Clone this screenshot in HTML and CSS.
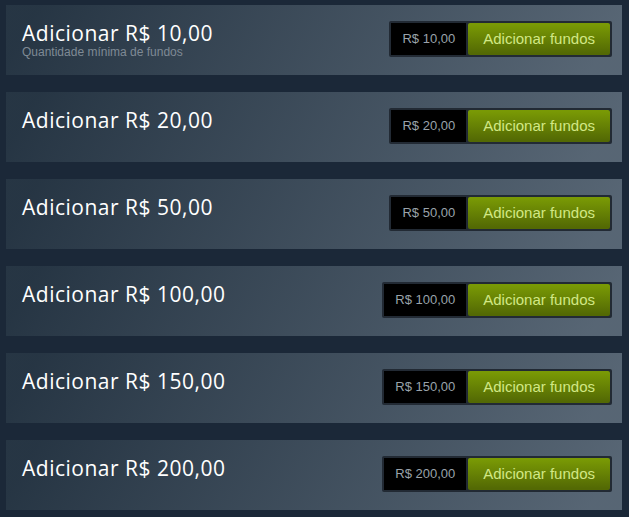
FILE: index.html
```html
<!DOCTYPE html>
<html lang="pt-BR">
<head>
    <meta charset="UTF-8">
    <meta name="viewport" content="width=device-width, initial-scale=1.0">
    <title>Adicionar fundos</title>
    <link rel="stylesheet" href="styles.css">
</head>
<body>
    <div class="wallet-list">

        <div class="purchase-row">
            <div class="purchase-info">
                <h1>Adicionar R$ 10,00</h1>
                <p class="min-note">Quantidade mínima de fundos</p>
            </div>
            <div class="purchase-action">
                <div class="price">R$ 10,00</div>
                <a class="btn-green" href="#">Adicionar fundos</a>
            </div>
        </div>

        <div class="purchase-row">
            <div class="purchase-info">
                <h1>Adicionar R$ 20,00</h1>
            </div>
            <div class="purchase-action">
                <div class="price">R$ 20,00</div>
                <a class="btn-green" href="#">Adicionar fundos</a>
            </div>
        </div>

        <div class="purchase-row">
            <div class="purchase-info">
                <h1>Adicionar R$ 50,00</h1>
            </div>
            <div class="purchase-action">
                <div class="price">R$ 50,00</div>
                <a class="btn-green" href="#">Adicionar fundos</a>
            </div>
        </div>

        <div class="purchase-row">
            <div class="purchase-info">
                <h1>Adicionar R$ 100,00</h1>
            </div>
            <div class="purchase-action">
                <div class="price">R$ 100,00</div>
                <a class="btn-green" href="#">Adicionar fundos</a>
            </div>
        </div>

        <div class="purchase-row">
            <div class="purchase-info">
                <h1>Adicionar R$ 150,00</h1>
            </div>
            <div class="purchase-action">
                <div class="price">R$ 150,00</div>
                <a class="btn-green" href="#">Adicionar fundos</a>
            </div>
        </div>

        <div class="purchase-row">
            <div class="purchase-info">
                <h1>Adicionar R$ 200,00</h1>
            </div>
            <div class="purchase-action">
                <div class="price">R$ 200,00</div>
                <a class="btn-green" href="#">Adicionar fundos</a>
            </div>
        </div>

    </div>
</body>
</html>
```

FILE: styles.css
```css
* {
    margin: 0;
    padding: 0;
    box-sizing: border-box;
}

body {
    background-color: #1b2838;
    font-family: "Liberation Sans", Arial, sans-serif;
    color: #c6d4df;
}

.wallet-list {
    padding: 5px 7px 0 6px;
}

/* cada linha de valor */
.purchase-row {
    display: flex;
    justify-content: space-between;
    align-items: flex-start;
    height: 70px;
    margin-bottom: 17px;
    padding: 16px 10px 0 16px;
    background: linear-gradient(-60deg, rgba(226, 244, 255, 0.3) 5%, rgba(84, 107, 115, 0.2) 95%);
}

.purchase-info h1 {
    font-family: "Open Sans", sans-serif;
    font-size: 21px;
    font-weight: normal;
    line-height: 25px;
    letter-spacing: 0.5px;
    color: #ffffff;
}

.min-note {
    font-size: 12px;
    line-height: 13px;
    color: #7f8a95;
}

.purchase-action {
    display: flex;
    gap: 2px;
    padding: 2px;
    background-color: #222a34;
    border-radius: 2px;
}

.price {
    background-color: #000;
    color: #9aa3ab;
    font-size: 13px;
    line-height: 32px;
    padding: 0 11px;
}

.btn-green {
    display: block;
    padding: 0 15px;
    line-height: 32px;
    font-size: 15px;
    color: #d2e885;
    text-decoration: none;
    border-radius: 2px;
    background: linear-gradient(to bottom, #799905 5%, #536904 95%);
}

.btn-green:hover {
    background: linear-gradient(to bottom, #a4d007 5%, #536904 95%);
    color: #fff;
}
```
